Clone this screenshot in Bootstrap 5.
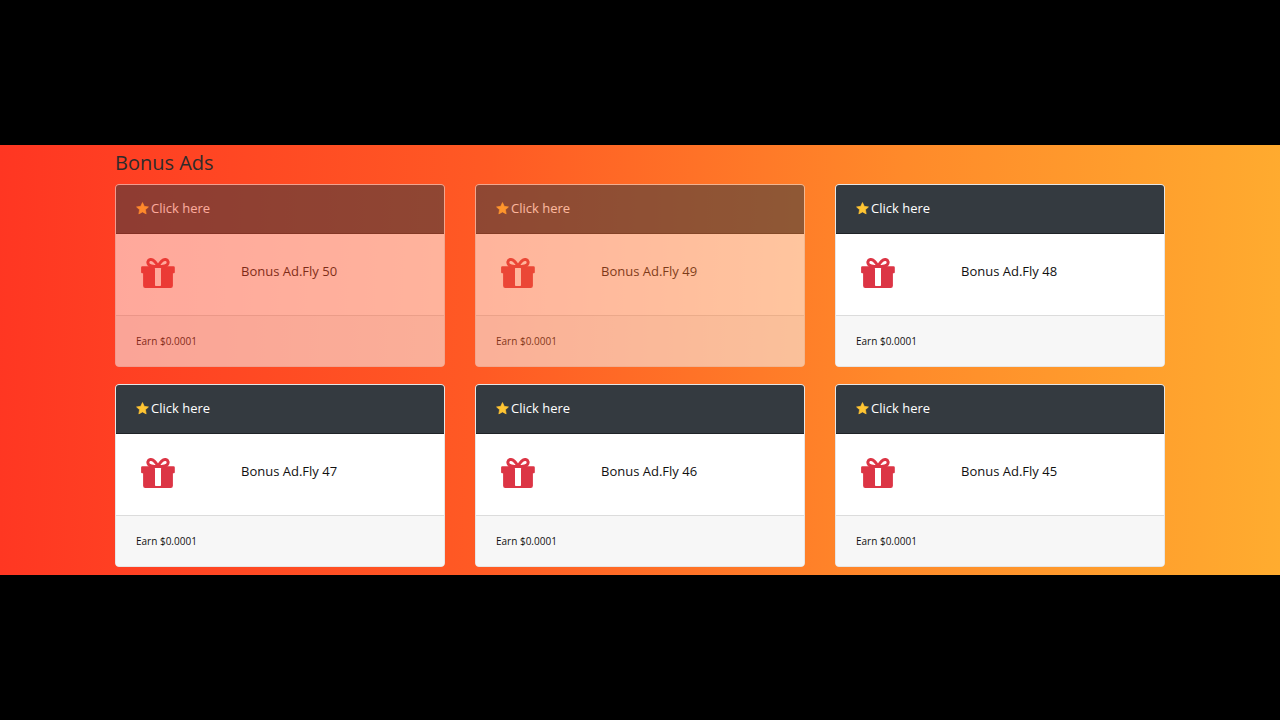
<!DOCTYPE html>
<html lang="en"><head><meta charset="utf-8"><title>Bonus Ads</title>
<link href="https://cdn.jsdelivr.net/npm/bootstrap@5.3.0/dist/css/bootstrap.min.css" rel="stylesheet">
<style>
html,body{height:100%}
body{background:#000;font-family:"Open Sans",sans-serif;overflow:hidden}
.stage{height:430px;width:1280px;background:linear-gradient(92deg,#ff3622 0%,#ff5a24 38%,#ff8a2a 70%,#ffac2f 100%)}
.wrap{width:1050px}
.ttl{font-size:20px;line-height:24px;font-weight:400;color:#2f2b2b;margin:6px 0 9px}
.cards{display:grid;grid-template-columns:repeat(3,330px);column-gap:30px;row-gap:17px}
.ad{height:183px;border:1px solid #e6e6e6;border-radius:4px;background:#fff;overflow:hidden;display:flex;flex-direction:column;color:#111}
.ad.dim{opacity:.55}
.ad-top{height:49px;background:#343a40;color:#fff;font-size:13px;padding:0 20px;display:flex;align-items:center;gap:2px;border-bottom:1px solid #1f2327}
.ad-mid{height:81px;display:flex;align-items:center;padding:0 0 4px 25px;font-size:13px}
.ad-mid svg{width:34px;height:30px;flex:none}
.ad-mid span{margin:0 0 2px 66px}
.ad-bot{flex:1;background:#f7f7f7;border-top:1px solid #dcdcdc;font-size:10px;padding:1px 20px 0;display:flex;align-items:center}
.st{width:13px;height:13px;fill:#ffc533;flex:none;margin-bottom:1px}
.gf{fill:#dc3545}
</style></head>
<body class="d-flex align-items-center">
<div class="stage d-flex justify-content-center">
<div class="wrap">
<h1 class="ttl">Bonus Ads</h1>
<div class="cards" id="g">
<div class="ad dim"><div class="ad-top"><svg class="st" viewBox="0 0 24 24"><path d="M12 1l3.300 7 7.700 1-5.600 5.300 1.400 7.700-6.800-3.700-6.800 3.700 1.400-7.700L1 9l7.700-1z" stroke="#ffc533" stroke-width="1.200" stroke-linejoin="round"/></svg>Click here</div><div class="ad-mid"><svg viewBox="0 0 34 30"><path class="gf" d="M1.500 8.200h31a1.300 1.300 0 0 1 1.300 1.300v4.700a1 1 0 0 1-1 1h-.9v12.600a2.200 2.200 0 0 1-2.200 2.200H4.300a2.200 2.200 0 0 1-2.200-2.200V15.200h-1a1 1 0 0 1-1-1V9.500a1.300 1.300 0 0 1 1.400-1.300z"/><rect x="14" y="9.500" width="6" height="18.500" rx=".8" fill="#fff"/><path d="M17 8.200C14 2.700 11.500 1.300 9.300 1.500 6.800 1.900 6 5 8 7c1.500 1.300 5 1.700 9 1.200zm0 0c3-5.500 5.500-6.900 7.700-6.700 2.500.4 3.300 3.500 1.300 5.500-1.500 1.300-5 1.700-9 1.200z" fill="none" stroke="#dc3545" stroke-width="3"/></svg><span>Bonus Ad.Fly 50</span></div><div class="ad-bot">Earn $0.0001</div></div>
<div class="ad dim"><div class="ad-top"><svg class="st" viewBox="0 0 24 24"><path d="M12 1l3.300 7 7.700 1-5.600 5.300 1.400 7.700-6.800-3.700-6.800 3.700 1.400-7.700L1 9l7.700-1z" stroke="#ffc533" stroke-width="1.200" stroke-linejoin="round"/></svg>Click here</div><div class="ad-mid"><svg viewBox="0 0 34 30"><path class="gf" d="M1.500 8.200h31a1.300 1.300 0 0 1 1.300 1.300v4.700a1 1 0 0 1-1 1h-.9v12.600a2.200 2.200 0 0 1-2.200 2.200H4.300a2.200 2.200 0 0 1-2.200-2.200V15.200h-1a1 1 0 0 1-1-1V9.500a1.300 1.300 0 0 1 1.400-1.300z"/><rect x="14" y="9.500" width="6" height="18.500" rx=".8" fill="#fff"/><path d="M17 8.200C14 2.700 11.500 1.300 9.300 1.500 6.800 1.900 6 5 8 7c1.500 1.300 5 1.700 9 1.200zm0 0c3-5.500 5.500-6.900 7.700-6.700 2.500.4 3.300 3.500 1.300 5.500-1.500 1.300-5 1.700-9 1.200z" fill="none" stroke="#dc3545" stroke-width="3"/></svg><span>Bonus Ad.Fly 49</span></div><div class="ad-bot">Earn $0.0001</div></div>
<div class="ad"><div class="ad-top"><svg class="st" viewBox="0 0 24 24"><path d="M12 1l3.300 7 7.700 1-5.600 5.300 1.400 7.700-6.800-3.700-6.800 3.700 1.400-7.700L1 9l7.700-1z" stroke="#ffc533" stroke-width="1.200" stroke-linejoin="round"/></svg>Click here</div><div class="ad-mid"><svg viewBox="0 0 34 30"><path class="gf" d="M1.500 8.200h31a1.300 1.300 0 0 1 1.300 1.300v4.700a1 1 0 0 1-1 1h-.9v12.600a2.200 2.200 0 0 1-2.200 2.200H4.300a2.200 2.200 0 0 1-2.200-2.200V15.200h-1a1 1 0 0 1-1-1V9.500a1.300 1.300 0 0 1 1.400-1.300z"/><rect x="14" y="9.500" width="6" height="18.500" rx=".8" fill="#fff"/><path d="M17 8.200C14 2.700 11.500 1.300 9.300 1.500 6.800 1.900 6 5 8 7c1.500 1.300 5 1.700 9 1.200zm0 0c3-5.500 5.500-6.900 7.700-6.700 2.500.4 3.300 3.500 1.300 5.500-1.500 1.300-5 1.700-9 1.200z" fill="none" stroke="#dc3545" stroke-width="3"/></svg><span>Bonus Ad.Fly 48</span></div><div class="ad-bot">Earn $0.0001</div></div>
<div class="ad"><div class="ad-top"><svg class="st" viewBox="0 0 24 24"><path d="M12 1l3.300 7 7.700 1-5.600 5.300 1.400 7.700-6.800-3.700-6.800 3.700 1.400-7.700L1 9l7.700-1z" stroke="#ffc533" stroke-width="1.200" stroke-linejoin="round"/></svg>Click here</div><div class="ad-mid"><svg viewBox="0 0 34 30"><path class="gf" d="M1.500 8.200h31a1.300 1.300 0 0 1 1.300 1.300v4.700a1 1 0 0 1-1 1h-.9v12.600a2.200 2.200 0 0 1-2.200 2.200H4.300a2.200 2.200 0 0 1-2.200-2.200V15.200h-1a1 1 0 0 1-1-1V9.500a1.300 1.300 0 0 1 1.400-1.300z"/><rect x="14" y="9.500" width="6" height="18.500" rx=".8" fill="#fff"/><path d="M17 8.200C14 2.700 11.500 1.300 9.300 1.500 6.800 1.900 6 5 8 7c1.500 1.300 5 1.700 9 1.200zm0 0c3-5.500 5.500-6.900 7.700-6.700 2.500.4 3.300 3.500 1.300 5.500-1.500 1.300-5 1.700-9 1.200z" fill="none" stroke="#dc3545" stroke-width="3"/></svg><span>Bonus Ad.Fly 47</span></div><div class="ad-bot">Earn $0.0001</div></div>
<div class="ad"><div class="ad-top"><svg class="st" viewBox="0 0 24 24"><path d="M12 1l3.300 7 7.700 1-5.600 5.300 1.400 7.700-6.800-3.700-6.800 3.700 1.400-7.700L1 9l7.700-1z" stroke="#ffc533" stroke-width="1.200" stroke-linejoin="round"/></svg>Click here</div><div class="ad-mid"><svg viewBox="0 0 34 30"><path class="gf" d="M1.500 8.200h31a1.300 1.300 0 0 1 1.300 1.300v4.700a1 1 0 0 1-1 1h-.9v12.600a2.200 2.200 0 0 1-2.200 2.200H4.300a2.200 2.200 0 0 1-2.200-2.200V15.200h-1a1 1 0 0 1-1-1V9.500a1.300 1.300 0 0 1 1.400-1.300z"/><rect x="14" y="9.500" width="6" height="18.500" rx=".8" fill="#fff"/><path d="M17 8.200C14 2.700 11.500 1.300 9.300 1.500 6.800 1.900 6 5 8 7c1.500 1.300 5 1.700 9 1.200zm0 0c3-5.500 5.500-6.900 7.700-6.700 2.500.4 3.300 3.500 1.300 5.500-1.500 1.300-5 1.700-9 1.200z" fill="none" stroke="#dc3545" stroke-width="3"/></svg><span>Bonus Ad.Fly 46</span></div><div class="ad-bot">Earn $0.0001</div></div>
<div class="ad"><div class="ad-top"><svg class="st" viewBox="0 0 24 24"><path d="M12 1l3.300 7 7.700 1-5.600 5.300 1.400 7.700-6.800-3.700-6.800 3.700 1.400-7.700L1 9l7.700-1z" stroke="#ffc533" stroke-width="1.200" stroke-linejoin="round"/></svg>Click here</div><div class="ad-mid"><svg viewBox="0 0 34 30"><path class="gf" d="M1.500 8.200h31a1.300 1.300 0 0 1 1.300 1.300v4.700a1 1 0 0 1-1 1h-.9v12.600a2.200 2.200 0 0 1-2.200 2.200H4.300a2.200 2.200 0 0 1-2.200-2.200V15.200h-1a1 1 0 0 1-1-1V9.500a1.300 1.300 0 0 1 1.400-1.300z"/><rect x="14" y="9.500" width="6" height="18.500" rx=".8" fill="#fff"/><path d="M17 8.200C14 2.700 11.500 1.300 9.300 1.500 6.800 1.900 6 5 8 7c1.500 1.300 5 1.700 9 1.200zm0 0c3-5.500 5.500-6.900 7.700-6.700 2.500.4 3.300 3.500 1.300 5.500-1.500 1.300-5 1.700-9 1.200z" fill="none" stroke="#dc3545" stroke-width="3"/></svg><span>Bonus Ad.Fly 45</span></div><div class="ad-bot">Earn $0.0001</div></div>
</div></div></div>
<script src="https://cdn.jsdelivr.net/npm/bootstrap@5.3.0/dist/js/bootstrap.bundle.min.js"></script>
</body></html>
